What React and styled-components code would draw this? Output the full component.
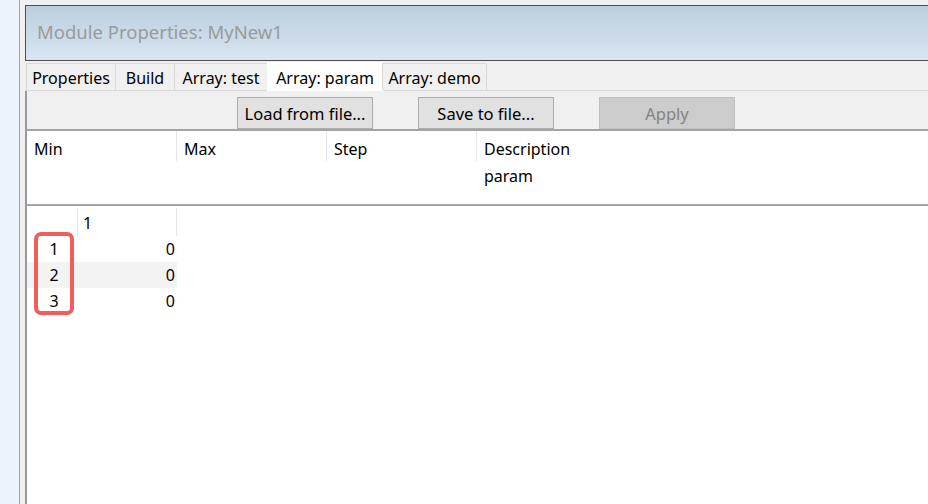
import React from "react";
import styled, { createGlobalStyle } from "styled-components";

const GlobalStyle = createGlobalStyle`
  html, body {
    margin: 0;
    padding: 0;
    background: #ebf3fd;
  }
  body {
    font-family: "Noto Sans", "Open Sans", sans-serif;
    color: #000;
  }
`;

const tabs = ["Properties", "Build", "Array: test", "Array: param", "Array: demo"];
const tabWidths = [90, 60, 94, 116, 105];
const columns = ["Min", "Max", "Step", "Description"];
const rows = [1, 2, 3];

function App() {
    const active = 3;
    return (
        <Page>
            <GlobalStyle />
            <SideStrip />
            <Frame>
                <TitleBar>Module Properties: MyNew1</TitleBar>
                <TabBar>
                    {tabs.map((t, i) => (
                        <Tab key={t} $active={i === active} style={{ width: tabWidths[i] }}>
                            {t}
                        </Tab>
                    ))}
                    <TabFill />
                </TabBar>
                <Panel>
                    <Toolbar>
                        <Button>Load from file...</Button>
                        <Button>Save to file...</Button>
                        <Button disabled>Apply</Button>
                    </Toolbar>
                    <Sheet>
                        <HeaderRow>
                            {columns.map((c, i) => (
                                <HeaderCell key={c} $last={i === columns.length - 1}>
                                    <div>{c}</div>
                                    {c === "Description" && <div>param</div>}
                                </HeaderCell>
                            ))}
                        </HeaderRow>
                        <Grid>
                            <GridHead>
                                <Corner />
                                <ColHead>1</ColHead>
                            </GridHead>
                            {rows.map((r) => (
                                <GridRow key={r} $alt={r % 2 === 0}>
                                    <RowNum>{r}</RowNum>
                                    <Value>0</Value>
                                </GridRow>
                            ))}
                            <Highlight />
                        </Grid>
                    </Sheet>
                </Panel>
            </Frame>
        </Page>
    );
}

export default App;

const Page = styled.div`
    display: flex;
    width: 928px;
    height: 504px;
    overflow: hidden;
`;

const SideStrip = styled.div`
    width: 19px;
    flex-shrink: 0;
    background: #ebf3fd;
    border-right: 1px solid #a3a3a3;
`;

const Frame = styled.div`
    flex: 1;
    display: flex;
    flex-direction: column;
    background: #f0f0f0;
    padding: 5px 0 0 5px;
    min-width: 0;
`;

const TitleBar = styled.div`
    height: 56px;
    flex-shrink: 0;
    box-sizing: border-box;
    border: 1px solid #4f4f4f;
    border-right: none;
    background: linear-gradient(#bccedd, #d9e5f2);
    color: #9a9a9a;
    font-size: 18.5px;
    display: flex;
    align-items: center;
    padding: 0 0 3px 11px;
    white-space: nowrap;
`;

const TabBar = styled.div`
    display: flex;
    height: 30px;
    flex-shrink: 0;
    padding-left: 1px;
    box-sizing: border-box;
    border-bottom: 1px solid #d9d9d9;
    align-items: flex-end;
`;

const Tab = styled.div`
    box-sizing: border-box;
    height: ${(p) => (p.$active ? "29px" : "27px")};
    margin-bottom: ${(p) => (p.$active ? "-1px" : "0")};
    background: ${(p) => (p.$active ? "#fff" : "#f0f0f0")};
    border: 1px solid ${(p) => (p.$active ? "#fff" : "#d9d9d9")};
    border-bottom: none;
    margin-right: -1px;
    font-size: 16px;
    display: flex;
    align-items: center;
    justify-content: center;
    padding-top: 1px;
    white-space: nowrap;
`;

const TabFill = styled.div`
    flex: 1;
`;

const Panel = styled.div`
    flex: 1;
    display: flex;
    flex-direction: column;
    border-left: 2px solid #9a98a0;
`;

const Toolbar = styled.div`
    height: 40px;
    flex-shrink: 0;
    display: flex;
    align-items: flex-start;
    padding: 6px 0 0 210px;
    gap: 45px;
    box-sizing: border-box;
    border-bottom: 2px solid #a4a4a8;
`;

const Button = styled.button`
    width: 136px;
    height: 32px;
    box-sizing: border-box;
    border: 1px solid ${(p) => (p.disabled ? "#bfbfbf" : "#adadad")};
    background: ${(p) => (p.disabled ? "#cccccc" : "#e1e1e1")};
    color: ${(p) => (p.disabled ? "#838383" : "#000")};
    font-family: "Noto Sans", "Open Sans", sans-serif;
    font-size: 16.5px;
    padding: 0;
    margin: 0;
`;

const Sheet = styled.div`
    flex: 1;
    background: #fff;
    display: flex;
    flex-direction: column;
`;

const HeaderRow = styled.div`
    display: flex;
    height: 73px;
    flex-shrink: 0;
    border-bottom: 2px solid #a4a4a8;
`;

const HeaderCell = styled.div`
    width: 150px;
    box-sizing: border-box;
    padding: 5px 0 0 7px;
    font-size: 16px;
    line-height: 27px;
    position: relative;
    &::after {
        content: "";
        display: ${(p) => (p.$last ? "none" : "block")};
        position: absolute;
        right: 0;
        top: 0;
        height: 30px;
        border-right: 1px solid #e6e6e6;
    }
`;

const Grid = styled.div`
    position: relative;
    width: 150px;
    font-size: 16px;
`;

const GridHead = styled.div`
    display: flex;
    height: 28px;
    margin-top: 2px;
`;

const Corner = styled.div`
    width: 50px;
    border-right: 1px solid #e6e6e6;
`;

const ColHead = styled.div`
    width: 99px;
    border-right: 1px solid #e6e6e6;
    padding: 4px 0 0 5px;
    box-sizing: border-box;
`;

const GridRow = styled.div`
    display: flex;
    height: 26px;
    align-items: center;
    background: ${(p) => (p.$alt ? "#f3f3f3" : "#fff")};
`;

const RowNum = styled.div`
    width: 50px;
    padding-left: 4px;
    box-sizing: border-box;
    text-align: center;
`;

const Value = styled.div`
    width: 100px;
    text-align: right;
    padding-right: 2px;
    box-sizing: border-box;
`;

const Highlight = styled.div`
    position: absolute;
    left: 7px;
    top: 26px;
    width: 40px;
    height: 83px;
    box-sizing: border-box;
    border: 4px solid #ef5d5d;
    border-radius: 7px;
`;
